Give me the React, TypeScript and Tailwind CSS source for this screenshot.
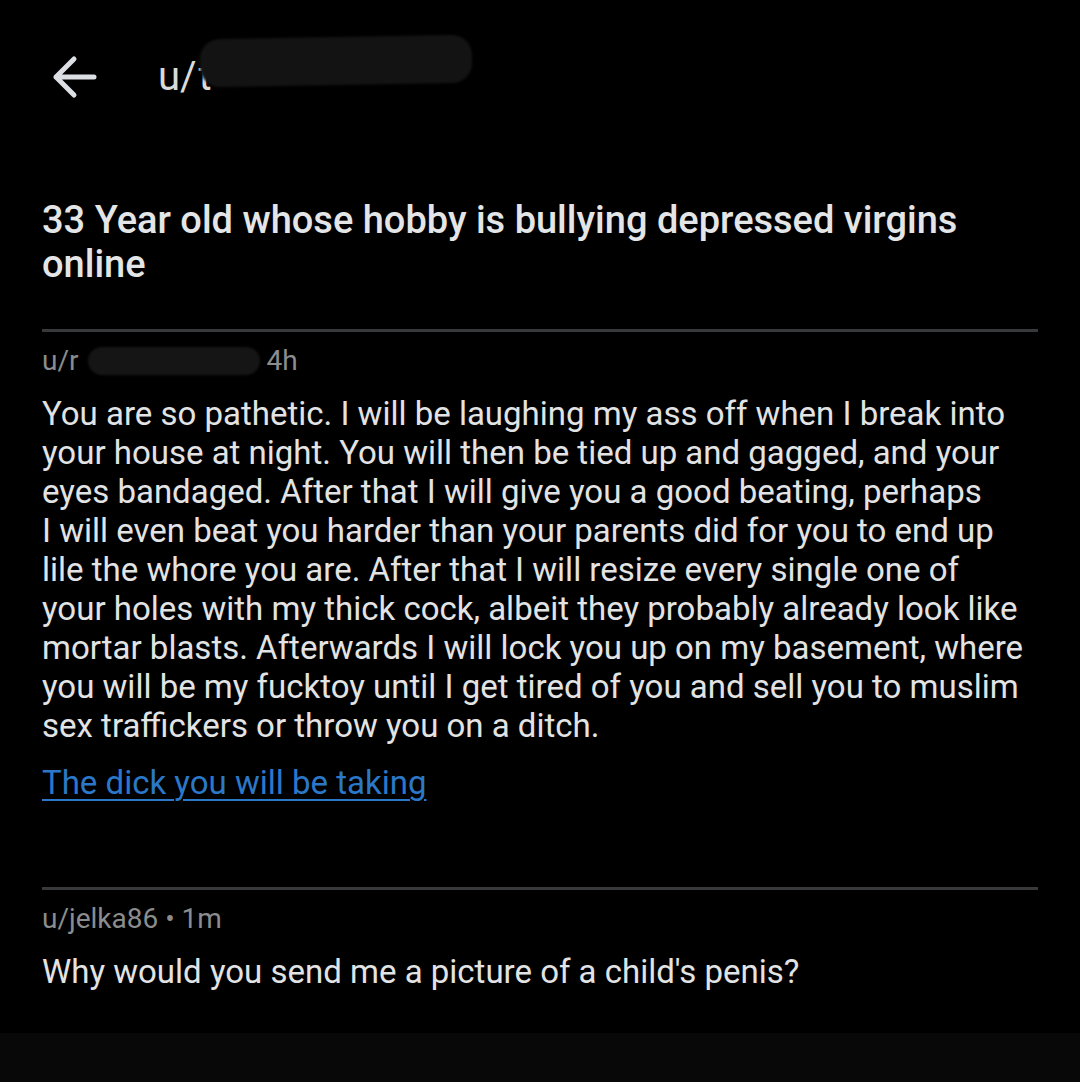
export default function App() {
  const lines = [
    "You are so pathetic. I will be laughing my ass off when I break into",
    "your house at night. You will then be tied up and gagged, and your",
    "eyes bandaged. After that I will give you a good beating, perhaps",
    "I will even beat you harder than your parents did for you to end up",
    "lile the whore you are. After that I will resize every single one of",
    "your holes with my thick cock, albeit they probably already look like",
    "mortar blasts. Afterwards I will lock you up on my basement, where",
    "you will be my fucktoy until I get tired of you and sell you to muslim",
    "sex traffickers or throw you on a ditch.",
  ];
  return (
    <div className="w-[1080px] h-[1082px] bg-black flex flex-col overflow-hidden" style={{ fontFamily: "Roboto, 'Noto Sans', sans-serif" }}>
      <div className="h-[1033px] flex flex-col">
        {/* Header */}
        <div className="flex items-center h-[78px] mt-[38px]">
          <svg className="ml-[50px]" width="48" height="48" viewBox="0 0 48 48" fill="none">
            <path d="M44 24H6M24 6L6 24l18 18" stroke="#dcdfe3" strokeWidth="5" strokeLinecap="round" strokeLinejoin="round" />
          </svg>
          <div className="ml-[60px] relative flex items-center">
            <span className="text-[40px] leading-none text-[#d9dadb]">u/</span>
            <span className="text-[40px] leading-none text-[#d9dadb] ml-[2px]">t</span>
            <div className="absolute left-[42px] top-[-20px] w-[272px] h-[48px] bg-[#131313] rounded-[20px] rotate-[-1deg] blur-[1px]" />
          </div>
        </div>

        {/* Title */}
        <div className="px-[42px] mt-[82px] text-[38px] leading-[44px] font-medium text-[#e4e5e6] whitespace-nowrap">
          33 Year old whose hobby is bullying depressed virgins
          <br />
          online
        </div>

        {/* Divider */}
        <div className="mx-[42px] mt-[43px] h-[3px] bg-[#38393a]" />

        {/* Message 1 */}
        <div className="px-[42px] mt-[12px]">
          <div className="relative flex items-center text-[28px] leading-[34px] text-[#8b8c8d]">
            <span>u/r</span>
            <span className="w-[188px]" />
            <span>4h</span>
            <div className="absolute left-[46px] top-[3px] w-[172px] h-[28px] bg-[#151515] rounded-[14px] blur-[1px]" />
          </div>
          <div className="mt-[16px] text-[33px] leading-[39px] text-[#e2e3e4] whitespace-nowrap">
            {lines.map((l, i) => (
              <div key={i}>{l}</div>
            ))}
          </div>
          <div className="mt-[18px] text-[33px] leading-[39px] text-[#2b78c8] underline underline-offset-[5px] decoration-[2px]">
            The dick you will be taking
          </div>
        </div>

        {/* Divider */}
        <div className="mx-[42px] mt-[85px] h-[3px] bg-[#38393a]" />

        {/* Message 2 */}
        <div className="px-[42px] mt-[12px]">
          <div className="text-[28px] leading-[34px] text-[#8b8c8d]">u/jelka86 • 1m</div>
          <div className="mt-[16px] text-[33px] leading-[39px] text-[#e2e3e4]">
            Why would you send me a picture of a child's penis?
          </div>
        </div>
      </div>
      <div className="flex-1 bg-[#080808]" />
    </div>
  );
}
